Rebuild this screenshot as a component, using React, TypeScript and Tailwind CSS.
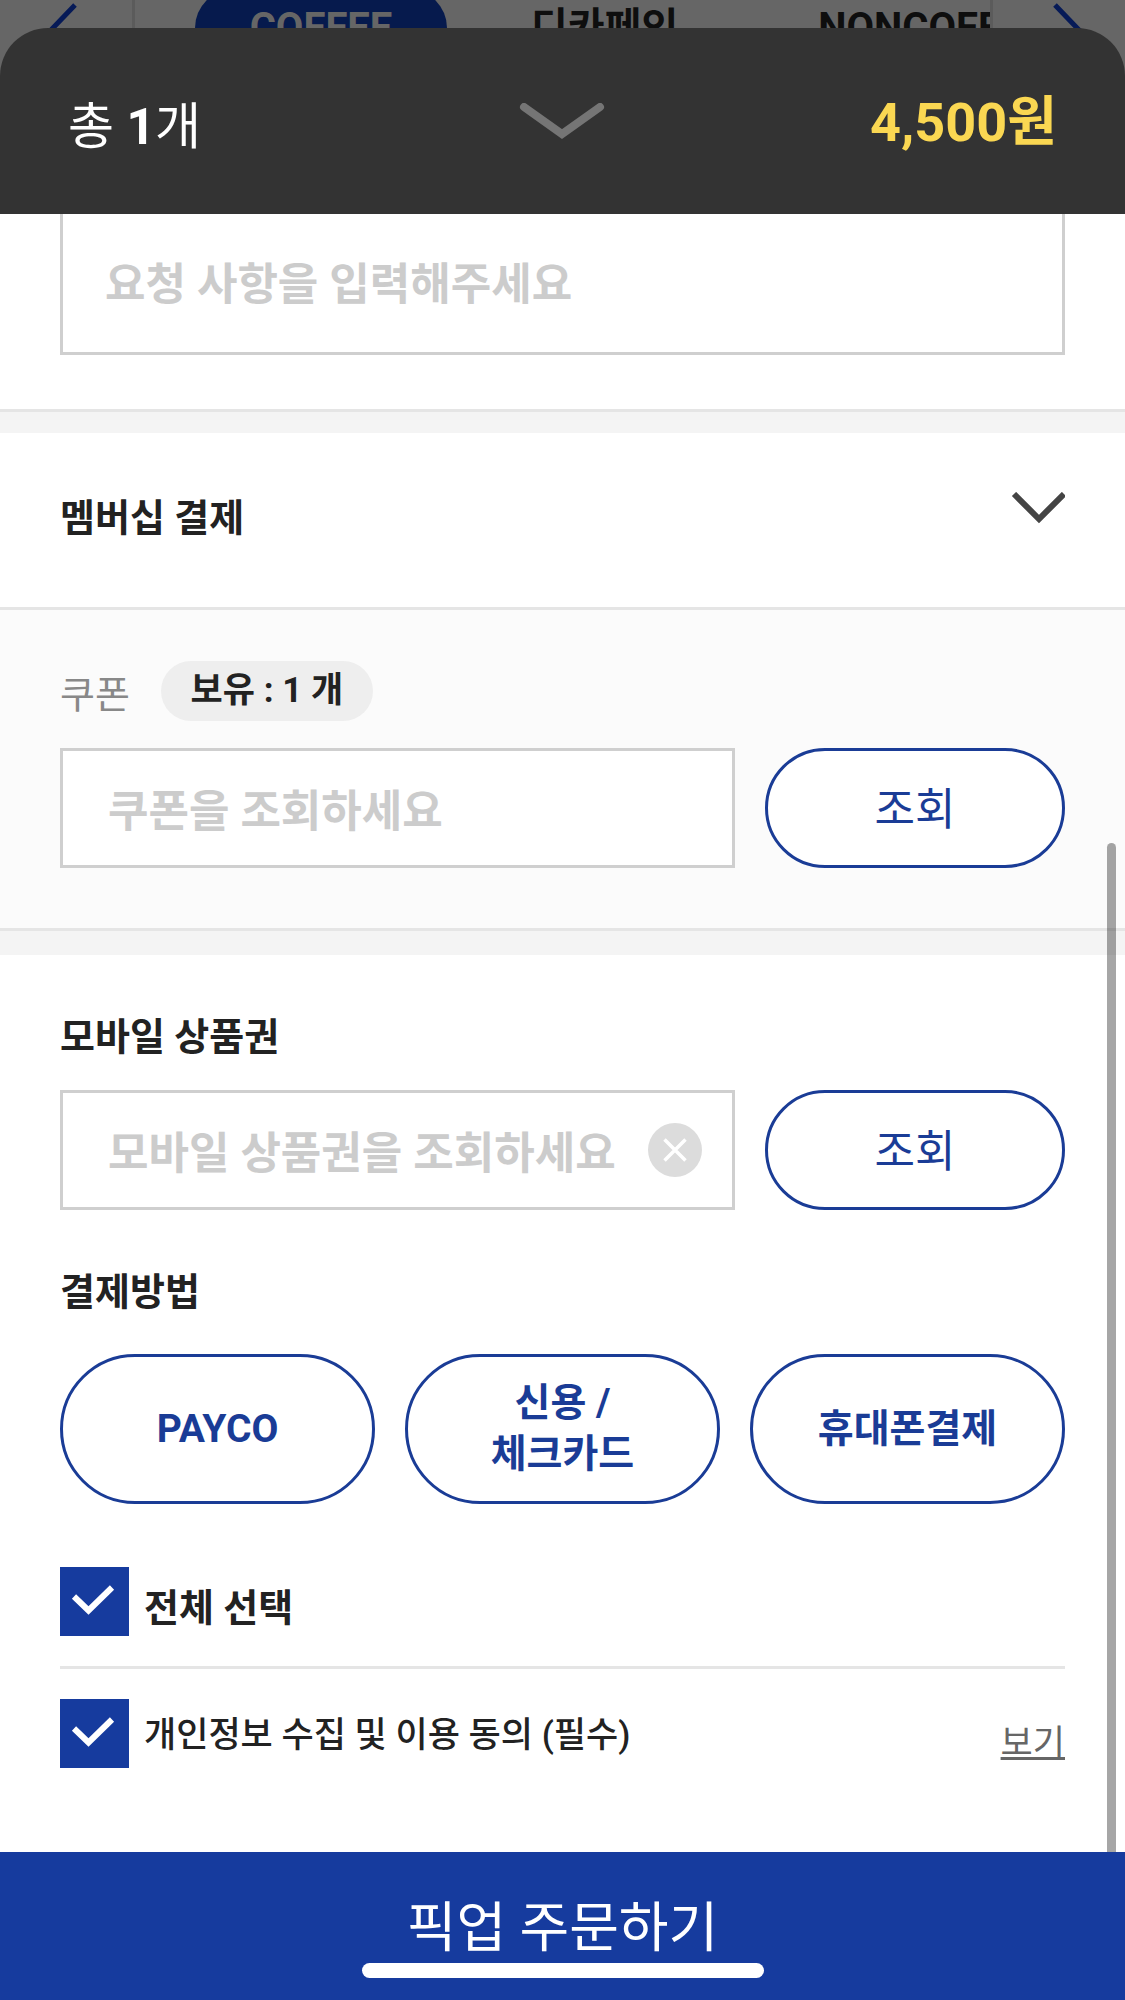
import React, { useState } from "react";

const payments = [
  { id: "payco", lines: ["PAYCO"] },
  { id: "card", lines: ["신용 /", "체크카드"] },
  { id: "phone", lines: ["휴대폰결제"] },
];

type ChevronProps = {
  className?: string;
  width: number;
  height: number;
  points: string;
  strokeWidth: number;
  round?: boolean;
};

function Chevron({ className, width, height, points, strokeWidth, round }: ChevronProps) {
  return (
    <svg
      className={className}
      width={width}
      height={height}
      viewBox={`0 0 ${width} ${height}`}
      fill="none"
      stroke="currentColor"
      strokeWidth={strokeWidth}
      strokeLinecap={round ? "round" : "butt"}
      aria-hidden="true"
    >
      <polyline points={points} />
    </svg>
  );
}

type CheckProps = {
  id: string;
  checked: boolean;
  onChange: (value: boolean) => void;
};

function Check({ id, checked, onChange }: CheckProps) {
  return (
    <span className="grid size-[69px] shrink-0">
      <input
        id={id}
        type="checkbox"
        checked={checked}
        onChange={(e) => onChange(e.target.checked)}
        className="peer col-start-1 row-start-1 size-full appearance-none border-[3px] border-[#163b9e] bg-white checked:bg-[#163b9e]"
      />
      <svg
        viewBox="0 0 69 69"
        className="pointer-events-none invisible col-start-1 row-start-1 size-full peer-checked:visible"
        fill="none"
        stroke="white"
        strokeWidth="6"
        aria-hidden="true"
      >
        <polyline points="14,29.5 28.5,43.5 52,20.5" />
      </svg>
    </span>
  );
}

function SearchButton() {
  return (
    <button
      type="button"
      className="h-[120px] w-[300px] shrink-0 rounded-full border-[3px] border-[#1a3c96] bg-white pt-1 text-[44px] text-[#1a3c96]"
    >
      조회
    </button>
  );
}

function App() {
  const [all, setAll] = useState(true);
  const [privacy, setPrivacy] = useState(true);

  return (
    <div className="flex min-h-screen flex-col overflow-x-hidden bg-[#666] font-[Roboto,'Noto_Sans_CJK_KR',sans-serif] text-[#222]">
      {/* dimmed category tabs behind the sheet */}
      <nav className="-mb-7 flex h-14 items-center overflow-hidden text-[40px] leading-[60px] font-bold text-[#0e0e0e]">
        <button type="button" aria-label="이전" className="flex w-[135px] shrink-0 justify-end border-r-[3px] border-[#5b5b5b] pr-[53px] text-[#061a57]">
          <Chevron width={32} height={60} points="28,7 4,32 28,57" strokeWidth={5} />
        </button>
        <div className="flex min-w-0 flex-1 items-center overflow-hidden pl-[60px]">
          <a href="#coffee" className="flex h-[78px] w-[252px] shrink-0 items-center justify-center rounded-full bg-[#061a4d] text-[#666]">
            COFFEE
          </a>
          <a href="#decaf" className="ml-[84px] shrink-0">
            디카페인
          </a>
          <a href="#noncoffee" className="ml-[140px] shrink-0">
            NONCOFFEE
          </a>
        </div>
        <button type="button" aria-label="다음" className="flex w-[135px] shrink-0 border-l-[3px] border-[#5b5b5b] pl-[58px] text-[#061a57]">
          <Chevron width={32} height={60} points="4,7 28,32 4,57" strokeWidth={5} />
        </button>
      </nav>

      <main className="relative flex flex-1 flex-col">
        <header className="grid h-[186px] grid-cols-3 items-center rounded-t-[48px] bg-[#333] px-[68px] text-white">
          <p className="pt-3 text-[50px] leading-[72px]">
            총 <strong>1</strong>개
          </p>
          <button type="button" aria-label="닫기" className="justify-self-center text-[#757575]">
            <Chevron width={86} height={36} points="5,4 43,31 81,4" strokeWidth={8} round />
          </button>
          <p className="justify-self-end pt-1 text-[54px] leading-[72px] font-bold text-[#fad752]">4,500원</p>
        </header>

        <div className="relative flex flex-1 flex-col bg-white">
          <div className="border-b-[3px] border-[#e5e5e5] px-[60px] pb-[54px]">
            <textarea
              aria-label="요청 사항"
              placeholder="요청 사항을 입력해주세요"
              className="block h-[141px] w-full resize-none overflow-hidden border-[3px] border-t-0 border-[#cfcfcf] px-[42px] pt-[38px] text-[44px] leading-[66px] font-bold placeholder:text-[#ccc]"
            />
          </div>
          <div className="h-[21px] bg-[#f4f4f4]" />

          <button
            type="button"
            className="flex h-[177px] items-center justify-between border-b-[3px] border-[#e5e5e5] px-[60px] text-left"
          >
            <span className="pb-1 text-[38px] leading-[56px] font-bold">멤버십 결제</span>
            <Chevron className="mb-6 text-[#444]" width={54} height={32} points="3,2 28,27 53,2" strokeWidth={6} />
          </button>

          <section className="border-b-[3px] border-[#e5e5e5] bg-[#fbfbfb] px-[60px] pt-[51px] pb-[60px]">
            <div className="mb-[27px] flex h-[60px] items-center gap-[31px]">
              <label htmlFor="coupon" className="pt-2 text-[38px] leading-[56px] text-[#888]">
                쿠폰
              </label>
              <span className="flex h-[60px] w-[212px] items-center justify-center rounded-full bg-[#eee] text-[35px] font-bold">
                보유 : 1 개
              </span>
            </div>
            <div className="flex gap-[30px]">
              <input
                id="coupon"
                type="text"
                placeholder="쿠폰을 조회하세요"
                className="h-[120px] min-w-0 flex-1 border-[3px] border-[#cfcfcf] bg-white px-[45px] pt-2 text-[44px] font-bold placeholder:text-[#ccc]"
              />
              <SearchButton />
            </div>
          </section>
          <div className="h-6 bg-[#f4f4f4]" />

          <section className="px-[60px] pt-[54px] pb-[84px]">
            <label htmlFor="voucher" className="block text-[38px] leading-[56px] font-bold">
              모바일 상품권
            </label>
            <div className="mt-[25px] flex gap-[30px]">
              <div className="flex h-[120px] min-w-0 flex-1 items-center border-[3px] border-[#cfcfcf] bg-white pr-[30px]">
                <input
                  id="voucher"
                  type="text"
                  placeholder="모바일 상품권을 조회하세요"
                  className="h-full min-w-0 flex-1 pt-2 pl-[45px] text-[44px] font-bold placeholder:text-[#ccc]"
                />
                <button type="button" aria-label="지우기" className="size-[54px] shrink-0 rounded-full bg-[#dcdcdc]">
                  <svg viewBox="0 0 54 54" fill="none" stroke="white" strokeWidth="3.5" aria-hidden="true">
                    <path d="M16.5 16.5 37.5 37.5M37.5 16.5 16.5 37.5" />
                  </svg>
                </button>
              </div>
              <SearchButton />
            </div>

            <h2 className="mt-[54px] text-[38px] leading-[56px] font-bold">결제방법</h2>
            <div className="mt-[34px] grid grid-cols-3 gap-[30px]">
              {payments.map((payment) => (
                <button
                  key={payment.id}
                  type="button"
                  className="h-[150px] rounded-full border-[3px] border-[#1a3c96] text-[39px] leading-[51px] font-bold text-[#1a3c96]"
                >
                  {payment.lines.map((line) => (
                    <span key={line} className="block">
                      {line}
                    </span>
                  ))}
                </button>
              ))}
            </div>

            <div className="mt-[63px] flex items-center gap-[15px] border-b-[3px] border-[#e5e5e5] pb-[30px]">
              <Check
                id="all"
                checked={all}
                onChange={(value) => {
                  setAll(value);
                  setPrivacy(value);
                }}
              />
              <label htmlFor="all" className="pt-3 text-[38px] leading-[56px] font-bold">
                전체 선택
              </label>
            </div>
            <div className="flex items-center gap-[15px] pt-[30px]">
              <Check id="privacy" checked={privacy} onChange={setPrivacy} />
              <label htmlFor="privacy" className="pt-1 text-[35px] leading-[56px] font-medium">
                개인정보 수집 및 이용 동의 (필수)
              </label>
              <a href="#privacy" className="ml-auto pt-5 text-[35px] leading-[48px] text-[#666] underline">
                보기
              </a>
            </div>
          </section>

          {/* scroll thumb */}
          <div className="absolute top-[629px] right-[9px] bottom-0 w-[9px] rounded-t-full bg-black/35" />
        </div>

        <footer className="relative bg-[#163b9e]">
          <button type="button" className="h-[148px] w-full pt-1 text-[54px] text-white">
            픽업 주문하기
          </button>
          <div className="absolute inset-x-0 bottom-[22px] mx-auto h-[15px] w-[402px] rounded-full bg-white" />
        </footer>
      </main>
    </div>
  );
}

export default App;
